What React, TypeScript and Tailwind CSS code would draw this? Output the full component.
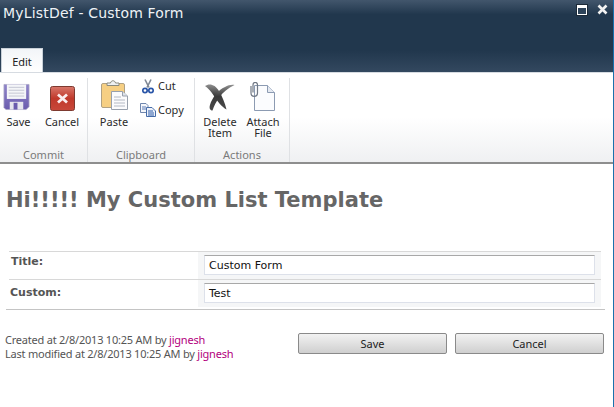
const tahoma = "font-['Noto_Sans','DejaVu_Sans',sans-serif]";

function SaveIcon() {
  return (
    <svg width="27" height="28" viewBox="0 0 28 28" className="mr-[5px]">
      <defs>
        <linearGradient id="fl" x1="0" y1="0" x2="0" y2="1">
          <stop offset="0" stopColor="#8f84c9" />
          <stop offset="1" stopColor="#6a5cae" />
        </linearGradient>
      </defs>
      <path d="M1 1H27V24L24 27H3L1 25Z" fill="url(#fl)" stroke="#a9a5c4" strokeWidth="0.8" />
      <rect x="4" y="1" width="20" height="15" fill="#f4f5f8" />
      <path d="M6 4H22M6 7H22M6 10H22M6 13H22" stroke="#c4c6d2" strokeWidth="1" />
      <rect x="7" y="19" width="14" height="8" fill="#e6e6ee" />
      <rect x="11" y="20" width="4" height="7" fill="#6a5cae" />
    </svg>
  );
}

function CancelIcon() {
  return (
    <svg width="25" height="25" viewBox="0 0 25 25">
      <defs>
        <linearGradient id="cn" x1="0" y1="0" x2="0" y2="1">
          <stop offset="0" stopColor="#d8776a" />
          <stop offset="0.5" stopColor="#c0392b" />
          <stop offset="1" stopColor="#c8483a" />
        </linearGradient>
      </defs>
      <rect x="0.5" y="0.5" width="24" height="24" rx="2" fill="url(#cn)" stroke="#7d3a30" />
      <path d="M8 8.5L17 16.5M17 8.5L8 16.5" stroke="#fbeeee" strokeWidth="2.8" />
    </svg>
  );
}

function PasteIcon() {
  return (
    <svg width="28" height="31" viewBox="0 0 28 31" className="ml-[1px]">
      <rect x="0.5" y="3.5" width="23" height="24" rx="1.5" fill="#f6cf83" stroke="#b0a184" />
      <path d="M6 5.5V3H9.5C10 0 14 0 14.5 3H18V5.5Z" fill="#eef0f2" stroke="#8a8a7e" />
      <path d="M10.5 11.5H21.5L26.5 16V29.5H10.5Z" fill="#fbfbfd" stroke="#98a0ad" />
      <path d="M21.5 11.5V16H26.5" fill="#dfe4ec" stroke="#98a0ad" />
      <path d="M13 17H20M13 20H24M13 23H24M13 26H24" stroke="#b4b9c4" />
    </svg>
  );
}

function CutIcon() {
  return (
    <svg width="12" height="15" viewBox="0 0 12 15">
      <path d="M3 0.5L7 8.5M9 0.5L5 8.5" stroke="#7e8794" strokeWidth="1.6" />
      <circle cx="3" cy="11.5" r="2.2" fill="none" stroke="#2a56a8" strokeWidth="1.7" />
      <circle cx="9" cy="11.5" r="2.2" fill="none" stroke="#2a56a8" strokeWidth="1.7" />
    </svg>
  );
}

function CopyIcon() {
  return (
    <svg width="16" height="14" viewBox="0 0 16 14">
      <path d="M0.5 0.5H6L8 2.5V9.5H0.5Z" fill="#f5f7fb" stroke="#6f86ad" />
      <path d="M2 4H6M2 6H6" stroke="#5b7bb5" />
      <path d="M6.5 4.5H12L15.5 8V13.5H6.5Z" fill="#eef2fa" stroke="#466ca8" />
      <path d="M8 8H13M8 10H14M8 12H14" stroke="#2f5ca8" />
    </svg>
  );
}

function DeleteIcon() {
  return (
    <svg width="30" height="28" viewBox="0 0 30 28">
      <defs>
        <linearGradient id="dl" x1="0" y1="0" x2="0" y2="1">
          <stop offset="0" stopColor="#8f8f8f" />
          <stop offset="0.45" stopColor="#3a3a3a" />
          <stop offset="1" stopColor="#4a4a4a" />
        </linearGradient>
      </defs>
      <path d="M0 3C4 0 10 1 14 8C17 13 20 20 21.5 26.5C17 24 12 18 9 13C6 8.5 3 5 0 3Z" fill="url(#dl)" />
      <path d="M29.5 2C23 5 18 9 14 15C11 19 9 23 7.5 27.5C5 27.5 4 25 5 22C7 15 13 7 20 4C23 2.5 26 1.5 29.5 2Z" fill="url(#dl)" />
    </svg>
  );
}

function AttachIcon() {
  return (
    <svg width="25" height="29" viewBox="0 0 25 29" className="mr-[2px]">
      <path d="M4.5 3.5H17.5L24.5 10.5V28.5H4.5Z" fill="#fbfcfe" stroke="#8c9bb2" />
      <path d="M17.5 3.5V10.5H24.5" fill="#e4e9f1" stroke="#8c9bb2" />
      <path d="M1 4V11C1 15.5 7.5 15.5 7.5 11V3C7.5 -0.5 3 -0.5 3 3V10.5" fill="none" stroke="#6f7783" strokeWidth="1.2" />
    </svg>
  );
}

function BigButton({ icon, lines, className }: { icon: React.ReactNode; lines: string[]; className: string }) {
  return (
    <div className={`flex flex-col items-center ${className}`}>
      <div className="h-[33px] flex items-end justify-center">{icon}</div>
      <div className="mt-[5px] text-center text-[11px] leading-[11px] text-[#2b2b2b] whitespace-nowrap">
        {lines.map((l) => (
          <div key={l}>{l}</div>
        ))}
      </div>
    </div>
  );
}

function Group({ label, width, children }: { label: string; width: string; children: React.ReactNode }) {
  return (
    <div className={`flex flex-col h-full border-r border-[#dfe1e4] ${width}`}>
      <div className="flex flex-1">{children}</div>
      <div className="h-[14px] text-center text-[11px] leading-[14px] text-[#7a7a7a]">{label}</div>
    </div>
  );
}

export default function App() {
  return (
    <div className={`w-[614px] h-[407px] bg-white border-r border-[#1a72ad] overflow-hidden ${tahoma}`}>
      <div className="relative h-[73px] bg-[linear-gradient(#42566c_0,#21374d_20%,#21374d_70%,#33485f_100%)] border-b border-[#d6dbe1]">
        <div className="pl-[3px] pt-[3px] text-[14px] tracking-[0.18px] leading-[20px] text-[#eef2f6] font-['DejaVu_Sans',sans-serif]">
          MyListDef - Custom Form
        </div>
        <div className="absolute left-[1px] bottom-0 w-[42px] h-[24px] bg-[linear-gradient(#f2f5f8,#ffffff)] border-t border-l border-r border-[#c8d0d8] text-center text-[11px] leading-[25px] text-[#222]">
          Edit
        </div>
        <div className="absolute left-[577px] top-[4px] flex items-center gap-[10px]">
          <div className="w-[10px] h-[10px] border border-white bg-[#2d4359] outline outline-1 outline-[#1c2a38] border-t-[3px]" />
          <svg width="11" height="11" viewBox="0 0 11 11">
            <path d="M1.5 1.5L9.5 9.5M9.5 1.5L1.5 9.5" stroke="#f2f2f2" strokeWidth="2.6" />
          </svg>
        </div>
      </div>

      <div className="h-[91px] pt-[5px] flex border-b-2 border-[#8e8e8e] bg-[linear-gradient(#ffffff_0,#ffffff_50%,#eff0f2_100%)]">
        <Group label="Commit" width="w-[88px]">
          <BigButton icon={<SaveIcon />} lines={["Save"]} className="w-[37px]" />
          <BigButton icon={<CancelIcon />} lines={["Cancel"]} className="w-[50px]" />
        </Group>
        <Group label="Clipboard" width="w-[107px]">
          <BigButton icon={<PasteIcon />} lines={["Paste"]} className="w-[52px]" />
          <div className="flex flex-col gap-[6px] -mt-[1px]">
            <div className="flex items-center gap-[2px] h-[18px] text-[11px] text-[#2b2b2b]">
              <span className="w-[16px] flex justify-center"><CutIcon /></span>Cut
            </div>
            <div className="flex items-center gap-[2px] h-[18px] text-[11px] text-[#2b2b2b]">
              <CopyIcon />Copy
            </div>
          </div>
        </Group>
        <Group label="Actions" width="w-[95px]">
          <BigButton icon={<DeleteIcon />} lines={["Delete", "Item"]} className="w-[50px]" />
          <BigButton icon={<AttachIcon />} lines={["Attach", "File"]} className="w-[36px]" />
        </Group>
      </div>

      <div className="pl-[6px] pt-[26px] h-[87px] text-[21px] leading-[20px] font-bold text-[#666666] font-['DejaVu_Sans',sans-serif]">
        Hi!!!!! My Custom List Template
      </div>

      <div className="w-[599px] ml-[6px] border-b border-[#c4c4c4] pb-[2px]">
        <div className="ml-[3px] w-[592px] border-t border-[#d8d8d8] flex h-[28px]">
          <div className="w-[189px] pl-[2px] pt-[1px] text-[11px] leading-[18px] font-bold text-[#555] font-['DejaVu_Sans',sans-serif]">Title:</div>
          <div className="flex-1 bg-[#f5f6f7] px-[6px] pt-[3px]">
            <div className="h-[20px] border border-[#dde1ea] border-t-[#a8a8a8] bg-white pl-[4px] text-[11px] leading-[19px] text-[#111] font-['DejaVu_Sans',sans-serif]">Custom Form</div>
          </div>
        </div>
        <div className="ml-[3px] w-[592px] border-t border-[#d8d8d8] flex h-[28px]">
          <div className="w-[189px] pl-[1px] pt-[4px] text-[11px] leading-[18px] font-bold text-[#555] font-['DejaVu_Sans',sans-serif]">Custom:</div>
          <div className="flex-1 bg-[#f5f6f7] px-[6px] pt-[3px]">
            <div className="h-[20px] border border-[#dde1ea] border-t-[#a8a8a8] bg-white pl-[4px] text-[11px] leading-[19px] text-[#111] font-['DejaVu_Sans',sans-serif]">Test</div>
          </div>
        </div>
      </div>

      <div className="flex pl-[5px] pt-[23px]">
        <div className="w-[293px] text-[11px] tracking-[-0.22px] leading-[14px] text-[#555] whitespace-nowrap">
          <div>Created at 2/8/2013 10:25 AM by <span className="text-[#b3007d]">jignesh</span></div>
          <div>Last modified at 2/8/2013 10:25 AM by <span className="text-[#b3007d]">jignesh</span></div>
        </div>
        <div className="h-[21px] w-[149px] rounded-[2px] border border-[#8a8a8a] bg-[linear-gradient(#f2f2f2,#cfcfcf)] text-center text-[11px] leading-[19px] text-[#222]">Save</div>
        <div className="h-[21px] w-[149px] ml-[8px] rounded-[2px] border border-[#8a8a8a] bg-[linear-gradient(#f2f2f2,#cfcfcf)] text-center text-[11px] leading-[19px] text-[#222]">Cancel</div>
      </div>
    </div>
  );
}
